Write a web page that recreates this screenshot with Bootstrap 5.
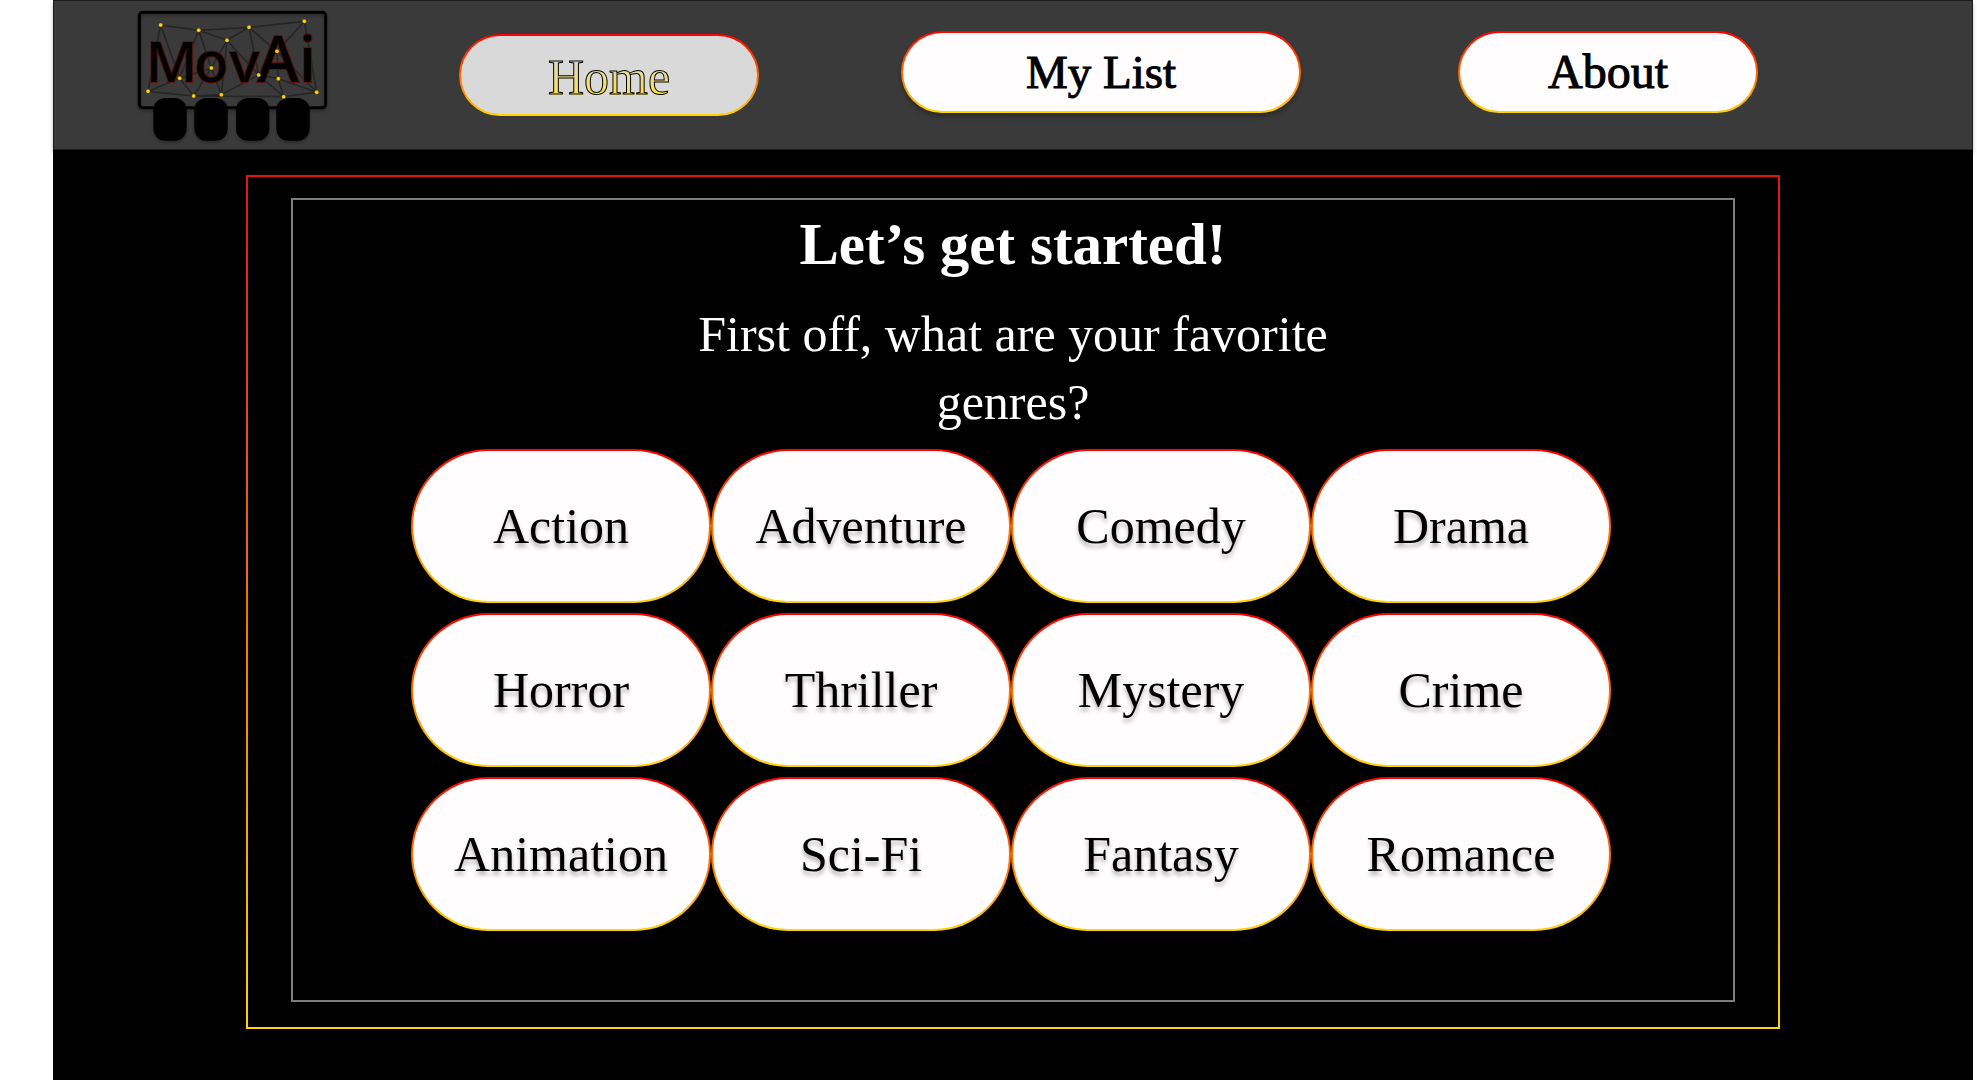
<!DOCTYPE html>
<html lang="en">
<head>
<meta charset="utf-8">
<meta name="viewport" content="width=device-width, initial-scale=1">
<title>MovAi</title>
<link href="https://cdn.jsdelivr.net/npm/bootstrap@5.3.0/dist/css/bootstrap.min.css" rel="stylesheet">
<style>
  body { background: #fff; font-family: "Liberation Serif", serif; padding: 0 4px 0 53px; }
  .app-shell { background: #000; min-height: 100vh; }
  .top-bar { height: 150px; background: #3a3a3a; border: 1px solid #1c1c1c; padding-left: 84px; box-shadow: 0 4px 4px rgba(0,0,0,.25); }
  .brand-mark { width: 190px; height: 134px; overflow: visible; }
  .pill {
    border: 2px solid transparent;
    border-radius: 80px;
    background: linear-gradient(#fffdfe, #fffdfe) padding-box, linear-gradient(#f00, #ffd600) border-box;
    color: #000; font-size: 50px; line-height: 60px; text-decoration: none;
    display: flex; align-items: center; justify-content: center;
  }
  .nav-pill { width: 300px; height: 82px; font-size: 48px; margin-bottom: 6px; -webkit-text-stroke: 1px #000; }
  .nav-wide { width: 400px; font-size: 47px; box-shadow: 0 4px 4px rgba(0,0,0,.25); }
  .nav-current { font-size: 50px; margin-bottom: 0; padding-top: 4px; background: linear-gradient(#d9d9d9, #d9d9d9) padding-box, linear-gradient(#f00, #ffd600) border-box; }
  .nav-current span { background: linear-gradient(#d9d9d9 20%, #ffe03a 85%); -webkit-background-clip: text; background-clip: text; color: transparent; }
  .gap-a { margin-left: 131px; }
  .gap-b { margin-left: 142px; }
  .gap-c { margin-left: 157px; }
  .frame-outer { width: 80%; max-width: 1534px; margin-top: 25px; border: 2px solid; border-image: linear-gradient(#e31414, #ffd400) 1; padding: 21px 43px 25px; }
  .frame-inner { border: 2px solid #7d7d7d; padding-bottom: 69px; }
  .headline { font-size: 59px; line-height: 88px; margin-bottom: 12px; font-weight: 700; }
  .question { font-size: 50px; line-height: 68px; max-width: 700px; margin-bottom: 13px; }
  .genre-grid { max-width: 1200px; row-gap: 10px; }
  .genre { width: 100%; height: 154px; padding: 0; text-shadow: 0 4px 4px rgba(0,0,0,.3); }
</style>
</head>
<body>
<div class="app-shell">
  <header class="top-bar d-flex align-items-center">
    <a href="#" class="d-block flex-shrink-0" aria-label="MovAi">
      <svg class="brand-mark d-block" viewBox="54 24 570 402">
        <defs>
          <filter id="soft" x="-10%" y="-10%" width="120%" height="130%"><feDropShadow dx="0" dy="6" stdDeviation="4" flood-color="#000" flood-opacity=".3"/></filter>
        </defs>
        <rect x="58" y="37" width="559" height="286" rx="10" fill="none" stroke="#000" stroke-width="9" filter="url(#soft)"/>
        <g filter="url(#soft)">
          <rect x="100" y="294" width="100" height="128" rx="36"/>
          <rect x="223" y="294" width="100" height="128" rx="36"/>
          <rect x="348" y="294" width="100" height="128" rx="36"/>
          <rect x="469" y="294" width="100" height="128" rx="36"/>
        </g>
        <g stroke="#000" stroke-opacity=".34" stroke-width="5" fill="none">
          <path d="M122 75L236 91L387 82L553 64M122 75L84 274L179 235L122 75M236 91L179 235L221 288L84 274M236 91L321 121L387 82L471 154L553 64L590 277L471 154L475 236L491 290L590 277L475 236M236 91L274 204L321 121L304 284L274 204L179 235M221 288L304 284L416 225L321 121M387 82L416 225L471 154M416 225L491 290L221 288M221 288L274 204M416 225L475 236"/>
        </g>
        <g font-family="'Noto Sans', sans-serif" font-size="168" font-weight="500" fill="#000" stroke="#5a1212" stroke-width="6" paint-order="stroke">
          <text y="247"><tspan x="78">M</tspan><tspan x="223">o</tspan><tspan x="329">v</tspan></text>
          <text y="247" font-size="190"><tspan x="412">A</tspan><tspan x="537">i</tspan></text>
        </g>
        <g fill="#ffd60a" stroke="#4b3d00" stroke-width="1">
          <circle cx="122" cy="75" r="6"/><circle cx="236" cy="91" r="6"/><circle cx="387" cy="82" r="6"/><circle cx="553" cy="64" r="6"/>
          <circle cx="321" cy="121" r="6"/><circle cx="471" cy="154" r="6"/><circle cx="274" cy="204" r="6"/><circle cx="179" cy="235" r="6"/>
          <circle cx="416" cy="225" r="6"/><circle cx="475" cy="236" r="6"/><circle cx="84" cy="274" r="6"/><circle cx="221" cy="288" r="6"/>
          <circle cx="304" cy="284" r="6"/><circle cx="491" cy="290" r="6"/><circle cx="590" cy="277" r="6"/>
        </g>
      </svg>
    </a>
    <nav class="d-flex align-items-center" aria-label="Main">
      <a class="pill nav-pill nav-current gap-a" href="#" aria-current="page"><span>Home</span></a>
      <a class="pill nav-pill nav-wide gap-b" href="#">My List</a>
      <a class="pill nav-pill gap-c" href="#">About</a>
    </nav>
  </header>
  <main class="d-flex justify-content-center">
    <section class="frame-outer">
      <div class="frame-inner text-center text-white">
        <h1 class="headline">Let’s get started!</h1>
        <p class="question mx-auto">First off, what are your favorite genres?</p>
        <div class="pe-1">
          <div class="genre-grid row row-cols-4 gx-0 mx-auto">
            <div class="col"><button type="button" class="pill genre">Action</button></div>
            <div class="col"><button type="button" class="pill genre">Adventure</button></div>
            <div class="col"><button type="button" class="pill genre">Comedy</button></div>
            <div class="col"><button type="button" class="pill genre">Drama</button></div>
            <div class="col"><button type="button" class="pill genre">Horror</button></div>
            <div class="col"><button type="button" class="pill genre">Thriller</button></div>
            <div class="col"><button type="button" class="pill genre">Mystery</button></div>
            <div class="col"><button type="button" class="pill genre">Crime</button></div>
            <div class="col"><button type="button" class="pill genre">Animation</button></div>
            <div class="col"><button type="button" class="pill genre">Sci-Fi</button></div>
            <div class="col"><button type="button" class="pill genre">Fantasy</button></div>
            <div class="col"><button type="button" class="pill genre">Romance</button></div>
          </div>
        </div>
      </div>
    </section>
  </main>
</div>
<script src="https://cdn.jsdelivr.net/npm/bootstrap@5.3.0/dist/js/bootstrap.bundle.min.js"></script>
</body>
</html>
